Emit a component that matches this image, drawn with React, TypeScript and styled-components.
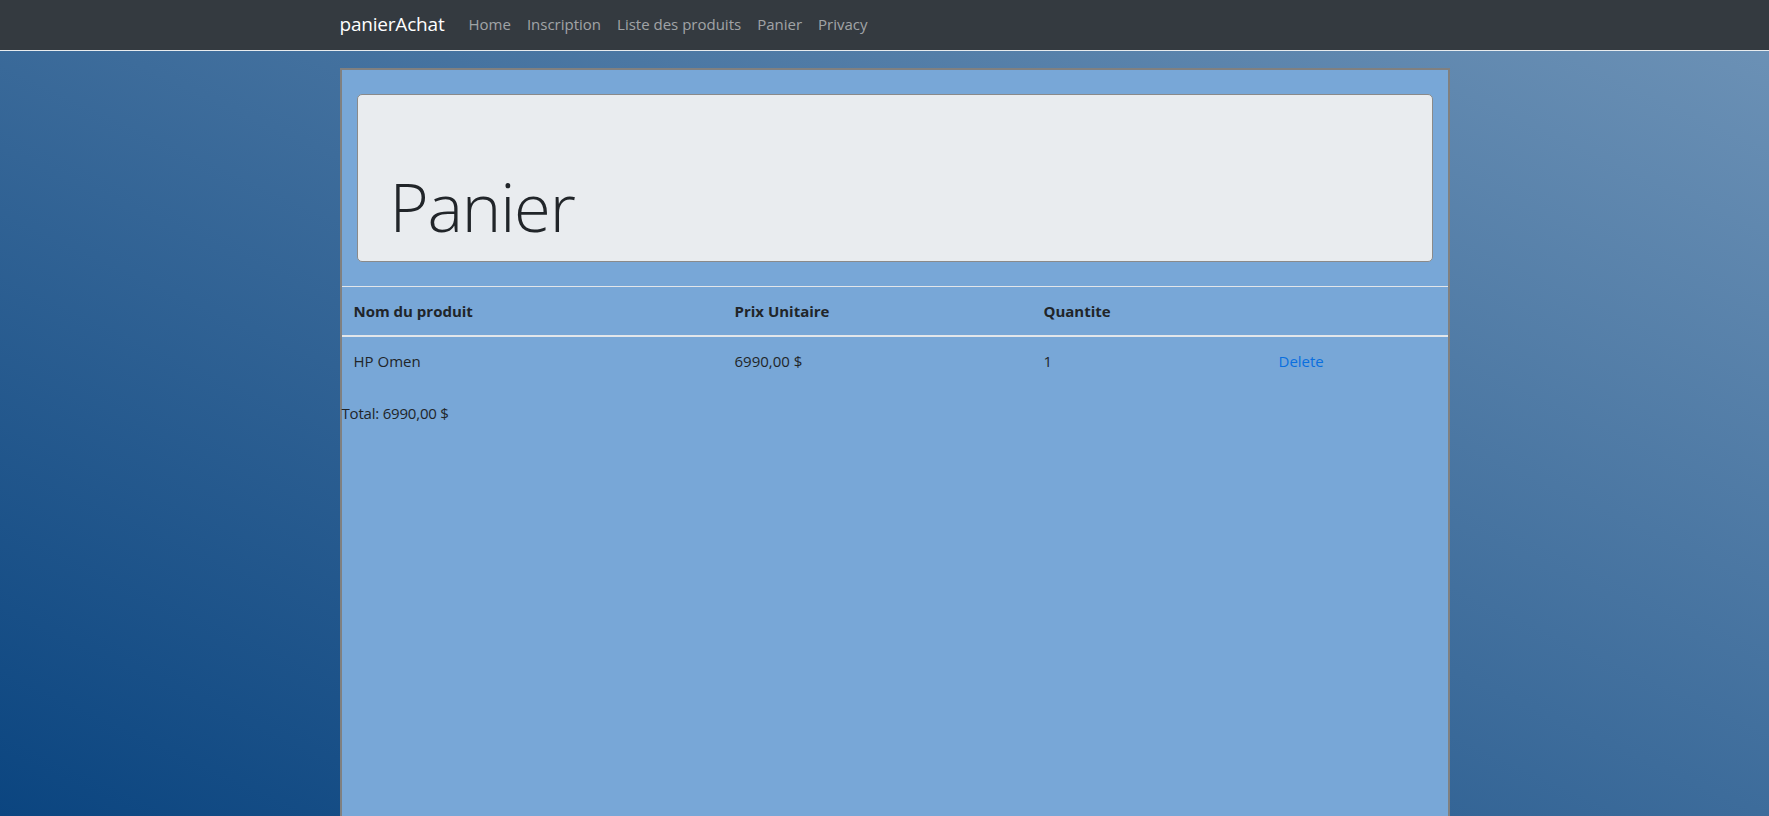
import React from "react";
import styled, { createGlobalStyle } from "styled-components";

const GlobalStyle = createGlobalStyle`
  html, body {
    margin: 0;
    padding: 0;
    min-height: 100%;
  }
  body {
    font-family: "Open Sans", "Noto Sans", "Liberation Sans", sans-serif;
    font-size: 16px;
    line-height: 1.5;
    color: #212529;
    background: linear-gradient(to top right, #0b4580 0%, #3d6c9b 50%, #6e93b7 100%) fixed;
    min-height: 816px;
    overflow: hidden;
  }
`;

const Page = styled.div`
  min-height: 816px;
  display: flex;
  flex-direction: column;
`;

const NavBar = styled.nav`
  height: 50px;
  background: #343a40;
  border-bottom: 1px solid #e8ecef;
  display: flex;
  align-items: center;
`;

const NavInner = styled.div`
  width: 1110px;
  margin-left: calc(50% - 545px);
  margin-top: -2px;
  display: flex;
  align-items: center;
`;

const Brand = styled.a`
  font-size: 19px;
  color: #ffffff;
  margin-right: 16px;
  text-decoration: none;
  letter-spacing: -0.2px;
`;

const NavLink = styled.a`
  font-size: 15px;
  color: rgba(255, 255, 255, 0.55);
  padding: 0 8px;
  text-decoration: none;
`;

const Panel = styled.main`
  width: 1106px;
  margin-left: calc(50% - 545px);
  margin-top: 17px;
  flex: 1;
  background: #78a7d7;
  border: 2px solid #808080;
  border-bottom: none;
  display: flex;
  flex-direction: column;
`;

const Jumbotron = styled.div`
  margin: 24px 15px 24px 15px;
  background: #e9ecef;
  border: 1px solid #8a8a8a;
  border-radius: 5px;
  height: 166px;
  padding: 0 32px;
  display: flex;
  align-items: flex-end;
`;

const Title = styled.h1`
  margin: 0 0 15px 0;
  font-size: 67px;
  font-weight: 300;
  line-height: 1.2;
  color: #212529;
  letter-spacing: -1.2px;
`;

const Table = styled.table`
  width: 100%;
  border-collapse: collapse;
  table-layout: fixed;
  margin-bottom: 16px;
`;

const Col = styled.col<{ $w: number }>`
  width: ${(p) => p.$w}px;
`;

const Th = styled.th`
  text-align: left;
  font-weight: 700;
  font-size: 15px;
  padding: 12px;
  height: 24px;
  line-height: 24px;
  border-top: 1px solid #e2e6ea;
  border-bottom: 2px solid #e2e6ea;
`;

const Td = styled.td`
  padding: 12px;
  font-size: 15px;
  line-height: 24px;
  color: #212529;
`;

const DeleteLink = styled.a`
  color: #0a6fdf;
  text-decoration: none;
`;

const Total = styled.p`
  margin: 0;
  font-size: 15px;
  line-height: 24px;
  letter-spacing: -0.2px;
`;

export default function App() {
  return (
    <>
      <GlobalStyle />
      <Page>
        <NavBar>
          <NavInner>
            <Brand href="#">panierAchat</Brand>
            <NavLink href="#">Home</NavLink>
            <NavLink href="#">Inscription</NavLink>
            <NavLink href="#">Liste des produits</NavLink>
            <NavLink href="#">Panier</NavLink>
            <NavLink href="#">Privacy</NavLink>
          </NavInner>
        </NavBar>
        <Panel>
          <Jumbotron>
            <Title>Panier</Title>
          </Jumbotron>
          <Table>
            <colgroup>
              <Col $w={381} />
              <Col $w={309} />
              <Col $w={235} />
              <Col $w={181} />
            </colgroup>
            <thead>
              <tr>
                <Th>Nom du produit</Th>
                <Th>Prix Unitaire</Th>
                <Th>Quantite</Th>
                <Th></Th>
              </tr>
            </thead>
            <tbody>
              <tr>
                <Td>HP Omen</Td>
                <Td>6990,00 $</Td>
                <Td>1</Td>
                <Td>
                  <DeleteLink href="#">Delete</DeleteLink>
                </Td>
              </tr>
            </tbody>
          </Table>
          <Total>Total: 6990,00 $</Total>
        </Panel>
      </Page>
    </>
  );
}
